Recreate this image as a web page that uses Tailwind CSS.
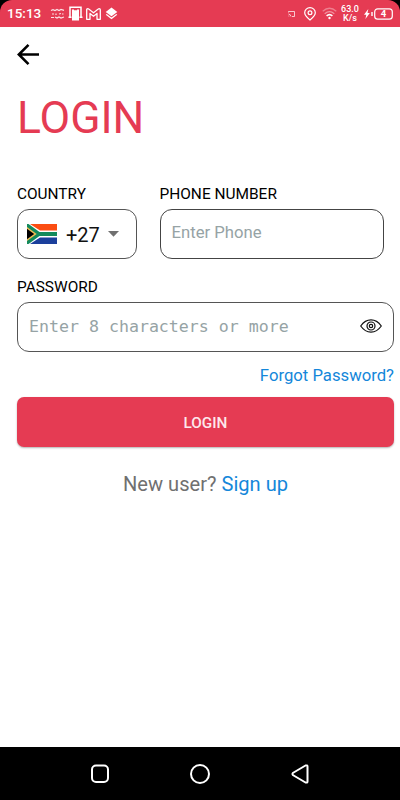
<!DOCTYPE html>
<html lang="en">
<head>
<meta charset="utf-8">
<meta name="viewport" content="width=device-width, initial-scale=1">
<title>Login</title>
<script src="https://cdn.jsdelivr.net/npm/@tailwindcss/browser@4"></script>
</head>
<body class="bg-black font-[Roboto,sans-serif]">
<div class="w-[400px] h-[800px] overflow-hidden flex flex-col bg-white">
  <header class="h-[27px] shrink-0 bg-black">
    <div class="h-full rounded-t-[12px] bg-[#e53b53] flex items-center pl-[7px] pr-[7px] text-white">
      <span class="text-[13.5px] leading-none font-medium w-[43px] pt-[1px] whitespace-nowrap">15:13</span>
      <svg class="w-[15px] h-[12px] shrink-0" viewBox="0 0 15 12" fill="none" stroke="#fff" stroke-opacity=".85" stroke-width="1.2"><path d="M1 2.500l2-.8 2 .8 2-1 2 1 2-1 3 .8M2 6h2M6 5.500v1.500M9 6l2-.5M12 6h1.500M1 9.500h3M5 9l2 1 2-1 2 1 3-1"/></svg>
      <svg class="w-[15px] h-[15px] ml-[3px] shrink-0" viewBox="0 0 15 15" fill="none" stroke="#fff"><path stroke-width="1.500" d="M3.500 11.200H.5M11.500 11.200h3M2 11V1.200h11V11"/><path fill="#fff" stroke="none" d="M4 3.500h2v.8h3v-.8h2v11H4z"/></svg>
      <svg class="w-[15px] h-[12px] ml-[3px] shrink-0" viewBox="0 0 15 12" fill="none" stroke="#fff" stroke-width="1.300" stroke-linejoin="round"><path d="M.7 1.800Q.7.700 1.800.700 2.500.700 7.500 4.800 12.500.700 13.200.700 14.300.700 14.300 1.800V11.300H11V5.500L7.500 8.300 4 5.500V11.300H.7z"/></svg>
      <svg class="w-[13px] h-[13px] ml-[4px] shrink-0" viewBox="0 0 13 13" fill="#fff"><path d="M6.500.500 12.300 5 6.500 9.300.700 5z"/><path d="m.700 7.700 5.800 4.600 5.800-4.600-1-.8-4.800 3.600-4.800-3.600z"/></svg>
      <div class="ml-auto flex items-center">
        <svg class="w-[7px] h-[6px]" viewBox="0 0 7 6" fill="none" stroke="#fff" stroke-opacity=".8" stroke-width=".9"><path d="M.5 1.500V.5h6v5H4M.5 3q2.200.2 2.500 2.500M.5 5h.8"/></svg>
        <svg class="w-[12px] h-[14px] ml-[9px]" viewBox="0 0 12 14" fill="none" stroke="#fff" stroke-width="1.200"><path d="M6 13Q.7 8.600.7 5.700a5.300 5 0 0 1 10.600 0Q11.300 8.600 6 13z"/><circle cx="6" cy="5.700" r="1.900"/></svg>
        <svg class="w-[15px] h-[13px] ml-[6px]" viewBox="0 0 15 13" fill="none" stroke="#fff" stroke-width="1.200"><path stroke-opacity=".35" d="M.7 4.300Q7.500-1.800 14.300 4.300"/><path stroke-opacity=".45" d="M2.700 6.800q4.800-4.300 9.600 0"/><path stroke-width="1.600" d="M4.600 8.900q2.900-2.600 5.800 0"/><circle cx="7.500" cy="11" r="1.200" fill="#fff" stroke="none"/></svg>
        <div class="w-[20px] ml-[3px] text-center text-[9px] leading-[9px] font-medium">63.0<br>K/s</div>
        <svg class="w-[29px] h-[12px] ml-[4px]" viewBox="0 0 29 12"><path fill="#fff" d="M4.300 1 0 6.800h2.300L1.400 11 5.800 5H3.500z"/><path stroke="#fff" stroke-width="1.400" d="M8 4v4"/><rect x="10.700" y=".8" width="17.600" height="10.400" rx="3" fill="none" stroke="#fff" stroke-width="1.200"/><text x="19.500" y="9.300" text-anchor="middle" font-family="Roboto" font-weight="700" font-size="9.500" fill="#fff">4</text></svg>
      </div>
    </div>
  </header>

  <main class="flex-1 flex flex-col pl-[17px] pr-[6px]">
    <button class="mt-[16px] w-[24px] h-[24px] block" aria-label="Back">
      <svg class="w-[24px] h-[24px]" viewBox="0 0 24 24" fill="none" stroke="#000" stroke-width="2.600"><path d="M22 11.500H2M11.500 1.800 1.800 11.500l9.700 9.700"/></svg>
    </button>
    <h1 class="mt-[25px] h-[52px] leading-[52px] text-[44.500px] text-[#e53b53] whitespace-nowrap">LOGIN</h1>

    <div class="flex mt-[41px]">
      <div class="w-[120px]">
        <div class="h-[18px] leading-[18px] text-[15.400px] text-black whitespace-nowrap">COUNTRY</div>
        <div class="mt-[6px] h-[50px] rounded-[12px] border border-[#555] flex items-center pl-[9px]">
          <svg class="w-[30px] h-[20px] shrink-0" viewBox="0 0 30 20"><path fill="#fff" d="M0 0h30v20H0z"/><path fill="#fb4d12" d="M3 0h27v6.500H13z"/><path fill="#1b3f9c" d="M3 20h27v-6.500H13z"/><path fill="#138a5c" d="M0 0h1.500l11 8H30v4H12.500l-11 8H0z"/><path fill="#f0bd55" d="M0 3 9.700 10 0 17z"/><path fill="#000" d="M0 4.800 7.200 10 0 15.200z"/></svg>
          <span class="ml-[9px] mt-[1px] w-[34px] text-[20px] leading-none text-[#111] whitespace-nowrap">+27</span>
          <svg class="ml-[8px] w-[11px] h-[6px]" viewBox="0 0 11 6"><path fill="#707070" d="M0 0h11L5.500 5.700z"/></svg>
        </div>
      </div>
      <div class="w-[224px] ml-[22.500px]">
        <div class="h-[18px] leading-[18px] text-[15.450px] text-black whitespace-nowrap">PHONE NUMBER</div>
        <div class="mt-[6px] w-[224px] h-[50px] rounded-[12px] border border-[#444] flex items-center pl-[11px] pb-[2px] text-[16.700px] text-[#96a3a5] whitespace-nowrap">Enter Phone</div>
      </div>
    </div>

    <div class="mt-[19px] h-[18px] leading-[18px] text-[15.400px] text-black whitespace-nowrap">PASSWORD</div>
    <div class="mt-[6px] h-[50px] rounded-[12px] border border-[#555] flex items-center justify-between pl-[11px] pr-[11px]">
      <span class="font-['DejaVu_Sans_Mono',monospace] text-[16.600px] text-[#96a3a5] whitespace-nowrap">Enter 8 characters or more</span>
      <svg class="w-[22px] h-[14px] mt-[-3px] shrink-0" viewBox="0 0 22 14" fill="none" stroke="#111" stroke-width="1.200"><path d="M.7 7Q5 .9 11 .9T21.300 7Q17 13.100 11 13.100T.7 7z"/><circle cx="11" cy="7" r="4"/><circle cx="11" cy="7" r="1.700"/></svg>
    </div>
    <div class="mt-[14px] h-[20px] leading-[20px] text-right text-[16.700px] text-[#1487da] whitespace-nowrap">Forgot Password?</div>
    <button class="mt-[11px] h-[50px] pt-[2px] shrink-0 rounded-[7px] bg-[#e53b53] text-[#fde8ec] text-[15.300px] font-medium shadow-[0_1px_2px_rgba(0,0,0,0.3)]">LOGIN</button>
    <div class="mt-[25px] h-[24px] leading-[24px] text-center text-[20.100px] text-[#707070] whitespace-nowrap">New user? <span class="text-[#1487da]">Sign up</span></div>
  </main>

  <nav class="h-[53px] shrink-0 bg-black flex items-center justify-center gap-[80px]">
    <svg class="w-[20px] h-[20px]" viewBox="0 0 20 20" fill="none" stroke="#fff" stroke-width="2"><rect x="2" y="1.500" width="16" height="16.500" rx="4"/></svg>
    <svg class="w-[20px] h-[20px]" viewBox="0 0 20 20" fill="none" stroke="#fff" stroke-width="2"><circle cx="10" cy="10" r="9"/></svg>
    <svg class="w-[20px] h-[20px]" viewBox="0 0 20 20" fill="none" stroke="#fff" stroke-width="2" stroke-linejoin="round"><path d="M15.500 1.500 2.800 9Q2 10 2.800 11L15.500 18.500Q17.500 19 17.500 17.500V2.500Q17.500 1 15.500 1.500z"/></svg>
  </nav>
</div>
</body>
</html>
